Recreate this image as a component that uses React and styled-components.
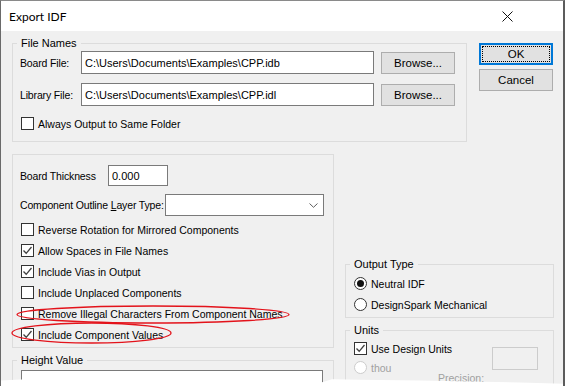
import React from 'react'
import styled, { createGlobalStyle } from 'styled-components'

const GlobalStyle = createGlobalStyle`
    html, body {
        margin: 0;
        padding: 0;
        background: #ffffff;
    }
`

function CheckMark() {
    return (
        <svg width="11" height="11" viewBox="0 0 11 11">
            <polyline points="1.5,5.5 4.2,8.3 9.5,2" fill="none" stroke="#404040" strokeWidth="1.3" />
        </svg>
    )
}

function Check({ checked, children }) {
    return (
        <OptionRow>
            <CheckBox>{checked && <CheckMark />}</CheckBox>
            <span>{children}</span>
        </OptionRow>
    )
}

function Radio({ selected, disabled, children }) {
    return (
        <OptionRow disabled={disabled}>
            <RadioCircle disabled={disabled}>{selected && <RadioDot />}</RadioCircle>
            <span>{children}</span>
        </OptionRow>
    )
}

function App() {
    return (
        <>
            <GlobalStyle />
            <Window>
                <TitleBar>
                    <Title>Export IDF</Title>
                    <CloseIcon width="11" height="11" viewBox="0 0 11 11">
                        <path d="M0.5 0.5 L10.5 10.5 M10.5 0.5 L0.5 10.5" stroke="#111" strokeWidth="1" />
                    </CloseIcon>
                </TitleBar>
                <Body>
                    <TopRow>
                        <GroupBox width={455}>
                            <Legend>File Names</Legend>
                            <FileInner>
                                <FileRow>
                                    <FieldLabel width={61}>Board File:</FieldLabel>
                                    <TextBox width={293} height={23}>C:\Users\Documents\Examples\CPP.idb</TextBox>
                                    <Button>Browse...</Button>
                                </FileRow>
                                <FileRow>
                                    <FieldLabel width={61}>Library File:</FieldLabel>
                                    <TextBox width={293} height={23}>C:\Users\Documents\Examples\CPP.idl</TextBox>
                                    <Button>Browse...</Button>
                                </FileRow>
                                <CheckSpacer>
                                    <Check>Always Output to Same Folder</Check>
                                </CheckSpacer>
                            </FileInner>
                        </GroupBox>
                        <ButtonColumn>
                            <Button primary>
                                <FocusRing>OK</FocusRing>
                            </Button>
                            <Button>Cancel</Button>
                        </ButtonColumn>
                    </TopRow>
                    <BottomRow>
                        <LeftColumn>
                            <GroupBox width={322}>
                                <OptionsInner>
                                    <FieldRow>
                                        <FieldLabel width={88}>Board Thickness</FieldLabel>
                                        <TextBox width={60} height={21}>0.000</TextBox>
                                    </FieldRow>
                                    <FieldRow>
                                        <FieldLabel width={145}>
                                            Component Outline <u>L</u>ayer Type:
                                        </FieldLabel>
                                        <Combo>
                                            <svg width="9" height="5" viewBox="0 0 9 5">
                                                <polyline points="0.5,0.5 4.5,4.3 8.5,0.5" fill="none" stroke="#606060" strokeWidth="1" />
                                            </svg>
                                        </Combo>
                                    </FieldRow>
                                    <CheckList>
                                        <Check>Reverse Rotation for Mirrored Components</Check>
                                        <Check checked>Allow Spaces in File Names</Check>
                                        <Check checked>Include Vias in Output</Check>
                                        <Check>Include Unplaced Components</Check>
                                        <Check>Remove Illegal Characters From Component Names</Check>
                                        <Check checked>Include Component Values</Check>
                                    </CheckList>
                                </OptionsInner>
                            </GroupBox>
                            <GroupBox width={322}>
                                <Legend>Height Value</Legend>
                                <HeightInner>
                                    <TextBox width={302} height={22} />
                                </HeightInner>
                            </GroupBox>
                        </LeftColumn>
                        <RightColumn>
                            <GroupBox width={209}>
                                <Legend>Output Type</Legend>
                                <RadioInner>
                                    <Radio selected>Neutral IDF</Radio>
                                    <Radio>DesignSpark Mechanical</Radio>
                                </RadioInner>
                            </GroupBox>
                            <GroupBox width={209}>
                                <Legend>Units</Legend>
                                <UnitsInner>
                                    <UnitsLeft>
                                        <Check checked>Use Design Units</Check>
                                        <Radio disabled>thou</Radio>
                                    </UnitsLeft>
                                    <PrecisionBox />
                                    <PrecisionLabel>Precision:</PrecisionLabel>
                                </UnitsInner>
                            </GroupBox>
                        </RightColumn>
                    </BottomRow>
                </Body>
                <Annotations width="565" height="386" viewBox="0 0 565 386">
                    <ellipse cx="153" cy="314.5" rx="136" ry="8.5" fill="none" stroke="#e3131b" strokeWidth="1.3" />
                    <ellipse cx="91.5" cy="333" rx="79.5" ry="10" fill="none" stroke="#e3131b" strokeWidth="1.3" />
                </Annotations>
                <TornEdge width="565" height="386" viewBox="0 0 565 386">
                    <path
                        d="M0 380.5 L20 379.5 L60 380.2 L140 380.6 L240 380.4 L300 381.6 L322 382.2 L332 379.2 L360 379.8 L420 380.6 L470 381.4 L520 382.4 L565 383.8 L565 386 L0 386 Z"
                        fill="#ffffff"
                    />
                </TornEdge>
            </Window>
        </>
    )
}

export default App

const Window = styled.div`
    position: relative;
    width: 565px;
    height: 386px;
    box-sizing: border-box;
    border-left: 1px solid #6a6a6a;
    border-top: 1px solid #8a8a8a;
    border-right: 2px solid #5c5c5c;
    display: flex;
    flex-direction: column;
    overflow: hidden;
    font-family: "Liberation Sans", Arial, sans-serif;
    font-size: 10.5px;
    color: #000;
`

const TitleBar = styled.div`
    height: 30px;
    background: #ffffff;
    display: flex;
    align-items: center;
    justify-content: space-between;
    padding: 0 50px 0 8px;
    flex-shrink: 0;
`

const Title = styled.div`
    font-family: Lato, "Noto Sans", sans-serif;
    font-size: 12px;
    color: #000;
`

const CloseIcon = styled.svg`
    display: block;
`

const Body = styled.div`
    flex: 1;
    background: #f0f0f0;
    padding: 12px 0 0 11px;
    display: flex;
    flex-direction: column;
    gap: 12px;
`

const TopRow = styled.div`
    display: flex;
    align-items: flex-start;
    gap: 12px;
`

const BottomRow = styled.div`
    display: flex;
    align-items: flex-start;
    gap: 11px;
`

const LeftColumn = styled.div`
    display: flex;
    flex-direction: column;
    gap: 12px;
`

const RightColumn = styled.div`
    display: flex;
    flex-direction: column;
    gap: 12px;
    padding-top: 110px;
`

const GroupBox = styled.div`
    position: relative;
    box-sizing: border-box;
    width: ${p => p.width}px;
    border: 1px solid #dcdcdc;
`

const Legend = styled.span`
    position: absolute;
    top: -7px;
    left: 4px;
    padding: 0 4px;
    line-height: 13px;
    background: #f0f0f0;
    font-size: 11px;
`

const FileInner = styled.div`
    padding: 7px 10px 11px 8px;
    display: flex;
    flex-direction: column;
    gap: 9px;
`

const FileRow = styled.div`
    display: flex;
    align-items: center;
    gap: 7px;

    & > span:first-child {
        margin-right: -7px;
    }
`

const CheckSpacer = styled.div`
    margin-top: 2px;
`

const FieldLabel = styled.span`
    width: ${p => p.width}px;
    flex-shrink: 0;
    white-space: nowrap;
    margin-left: -1px;
    font-size: 10.5px;
    letter-spacing: -0.15px;
`

const TextBox = styled.div`
    box-sizing: border-box;
    width: ${p => p.width}px;
    height: ${p => p.height}px;
    background: #ffffff;
    border: 1px solid #7a7a7a;
    padding: 0 3px;
    display: flex;
    align-items: center;
    white-space: nowrap;
    font-size: 11px;
`

const Button = styled.div`
    box-sizing: border-box;
    width: 74px;
    height: 22px;
    background: #e1e1e1;
    border: ${p => (p.primary ? '2px solid #0078d7' : '1px solid #adadad')};
    display: flex;
    align-items: center;
    justify-content: center;
    padding: ${p => (p.primary ? '1px' : '0')};
    font-size: 11.5px;
`

const FocusRing = styled.div`
    width: 100%;
    height: 100%;
    box-sizing: border-box;
    border: 1px dotted #000;
    display: flex;
    align-items: center;
    justify-content: center;
`

const ButtonColumn = styled.div`
    display: flex;
    flex-direction: column;
    gap: 4px;
`

const OptionsInner = styled.div`
    padding: 10px 8px 6px 8px;
    display: flex;
    flex-direction: column;
`

const FieldRow = styled.div`
    display: flex;
    align-items: center;
    margin-bottom: 8px;
`

const Combo = styled.div`
    box-sizing: border-box;
    width: 159px;
    height: 22px;
    background: #ffffff;
    border: 1px solid #7a7a7a;
    display: flex;
    align-items: center;
    justify-content: flex-end;
    padding-right: 5px;
`

const CheckList = styled.div`
    display: flex;
    flex-direction: column;
    gap: 8px;
    margin-top: -1px;
`

const OptionRow = styled.div`
    display: flex;
    align-items: center;
    height: 13px;
    gap: 4px;
    white-space: nowrap;
    color: ${p => (p.disabled ? '#a0a0a0' : '#000')};
`

const CheckBox = styled.div`
    box-sizing: border-box;
    width: 13px;
    height: 13px;
    border: 1px solid #333333;
    background: #ffffff;
    display: flex;
    align-items: center;
    justify-content: center;
`

const RadioCircle = styled.div`
    box-sizing: border-box;
    width: 13px;
    height: 13px;
    border-radius: 50%;
    border: 1px solid ${p => (p.disabled ? '#cccccc' : '#333333')};
    background: #ffffff;
    display: flex;
    align-items: center;
    justify-content: center;
`

const RadioDot = styled.div`
    width: 7px;
    height: 7px;
    border-radius: 50%;
    background: #111111;
`

const HeightInner = styled.div`
    padding: 9px 10px 10px 8px;
`

const RadioInner = styled.div`
    padding: 12px 8px 6px 8px;
    display: flex;
    flex-direction: column;
    gap: 8px;
`

const UnitsInner = styled.div`
    padding: 11px 15px 10px 8px;
    display: grid;
    grid-template-columns: 1fr 46px;
    column-gap: 8px;
`

const UnitsLeft = styled.div`
    display: flex;
    flex-direction: column;
    gap: 6px;
`

const PrecisionBox = styled.div`
    box-sizing: border-box;
    width: 46px;
    height: 23px;
    margin-top: 5px;
    border: 1px solid #cccccc;
    background: #f0f0f0;
`

const PrecisionLabel = styled.div`
    grid-column: 1 / 2;
    color: #a0a0a0;
    margin: -2px 0 0 84px;
`

const Annotations = styled.svg`
    position: absolute;
    left: -1px;
    top: -1px;
    pointer-events: none;
`

const TornEdge = styled.svg`
    position: absolute;
    left: -1px;
    top: -1px;
    pointer-events: none;
`
